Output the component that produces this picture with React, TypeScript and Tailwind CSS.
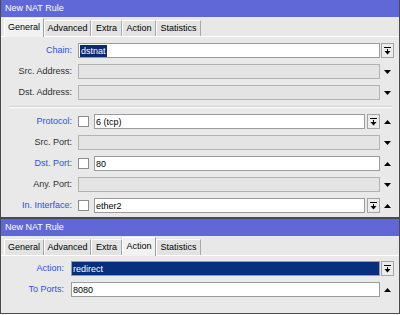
import React from 'react';

const TABS = [
    { name: 'General', w: 'w-[40px]' },
    { name: 'Advanced', w: 'w-[47px]' },
    { name: 'Extra', w: 'w-[31px]' },
    { name: 'Action', w: 'w-[34px]' },
    { name: 'Statistics', w: 'w-[45px]' },
];

const DownArrow = () => (
    <svg width="7" height="4" viewBox="0 0 7 4">
        <path d="M0 0h7L3.5 4z" fill="#000" />
    </svg>
);

const UpArrow = () => (
    <svg width="7" height="4" viewBox="0 0 7 4">
        <path d="M0 4h7L3.5 0z" fill="#000" />
    </svg>
);

const DropButton = () => (
    <div className="flex h-[15px] w-[13px] shrink-0 items-center justify-center border border-[#a4a4a4] bg-[#ececec]">
        <svg width="7" height="8" viewBox="0 0 7 8">
            <rect x="0" y="0" width="7" height="1" fill="#000" />
            <rect x="3" y="2" width="1" height="2" fill="#000" />
            <path d="M0.5 4h6L3.5 7.5z" fill="#000" />
        </svg>
    </div>
);

const Checkbox = () => <div className="h-[11px] w-[11px] shrink-0 border border-[#8c8c8c] bg-white" />;

type Kind = 'disabled' | 'text' | 'check';

function Row({
    label,
    blue,
    kind,
    value,
    drop,
    side,
    labelW,
    selected,
    allSelected,
}: {
    label: string;
    blue?: boolean;
    kind: Kind;
    value?: string;
    drop?: boolean;
    side?: 'up' | 'down' | 'drop';
    labelW: string;
    selected?: boolean;
    allSelected?: boolean;
}) {
    const input = (
        <div
            className={`flex h-[15px] min-w-0 flex-1 items-center border px-[1px] ${
                kind === 'disabled'
                    ? 'border-[#b2b2b2] bg-[#e4e4e4]'
                    : allSelected
                    ? 'border-[#9c9c9c] bg-[#06307e]'
                    : 'border-[#9c9c9c] bg-white'
            }`}
        >
            {value && (
                <span
                    className={`leading-[12px] ${
                        selected ? 'bg-[#0a2a72] px-[1px] text-white' : allSelected ? 'text-white' : 'text-black'
                    }`}
                >
                    {value}
                </span>
            )}
        </div>
    );
    return (
        <div className="flex h-[15px] items-center">
            <div className={`${labelW} shrink-0 text-right ${blue ? 'text-[#2c50e2]' : 'text-[#2e2e2e]'}`}>{label}</div>
            <div className="flex min-w-0 flex-1 items-center gap-[2px]">
                {kind === 'check' && <Checkbox />}
                {kind === 'check' && <div className="w-[1px]" />}
                {input}
                {drop && <DropButton />}
            </div>
            <div className="flex w-[14px] shrink-0 items-center justify-center pl-[1px]">
                {side === 'up' && <UpArrow />}
                {side === 'down' && <DownArrow />}
                {side === 'drop' && <DropButton />}
            </div>
        </div>
    );
}

function Tabs({ active }: { active: string }) {
    return (
        <div className="flex h-[20px] items-end border-b border-white bg-[#e8e8e8] pl-[3px]">
            {TABS.map((t) =>
                t.name === active ? (
                    <div
                        key={t.name}
                        className={`${t.w} relative z-10 -mb-px flex h-[19px] items-center justify-center border-l border-r border-t border-l-white border-r-[#9e9e9e] border-t-white bg-[#f2f2f2] pb-[1px] text-black`}
                    >
                        {t.name}
                    </div>
                ) : (
                    <div
                        key={t.name}
                        className={`${t.w} flex h-[16px] items-center justify-center border-l border-r border-t border-l-white border-r-[#a8a8a8] border-t-white bg-[#e3e3e3] text-black`}
                    >
                        {t.name}
                    </div>
                )
            )}
        </div>
    );
}

function TitleBar() {
    return <div className="flex h-[17px] items-center bg-[#5f68d6] pl-[4px] text-white">New NAT Rule</div>;
}

export default function App() {
    const lw = 'w-[77px] pr-[6px]';
    const lw2 = 'w-[70px] pr-[7px]';
    return (
        <div
            className="h-[315px] w-[400px] bg-white text-[9px] leading-[11px]"
            style={{ fontFamily: '"Liberation Sans", Arial, sans-serif' }}
        >
            <div className="flex h-[218px] flex-col border-x border-b border-[#4a4a4a] bg-[#e9e9e9]">
                <TitleBar />
                <Tabs active="General" />
                <div className="flex flex-col gap-[6px] pb-[4px] pl-0 pr-[5px] pt-[6px]">
                    <Row label="Chain:" blue kind="text" value="dstnat" selected side="drop" labelW={lw} />
                    <Row label="Src. Address:" kind="disabled" side="down" labelW={lw} />
                    <Row label="Dst. Address:" kind="disabled" side="down" labelW={lw} />
                    <div className="ml-[8px] mr-[2px] h-[2px] border-b border-t border-b-white border-t-[#d2d2d2]" />
                    <Row label="Protocol:" blue kind="check" value="6 (tcp)" drop side="up" labelW={lw} />
                    <Row label="Src. Port:" kind="disabled" side="down" labelW={lw} />
                    <Row label="Dst. Port:" blue kind="check" value="80" side="up" labelW={lw} />
                    <Row label="Any. Port:" kind="disabled" side="down" labelW={lw} />
                    <Row label="In. Interface:" blue kind="check" value="ether2" drop side="up" labelW={lw} />
                </div>
            </div>
            <div className="flex h-[96px] flex-col border border-[#4a4a4a] bg-[#e9e9e9]">
                <TitleBar />
                <Tabs active="Action" />
                <div className="flex flex-col gap-[6px] pr-[5px] pt-[5px]">
                    <Row label="Action:" blue kind="text" value="redirect" allSelected side="drop" labelW={lw2} />
                    <Row label="To Ports:" blue kind="text" value="8080" side="up" labelW={lw2} />
                </div>
            </div>
        </div>
    );
}
